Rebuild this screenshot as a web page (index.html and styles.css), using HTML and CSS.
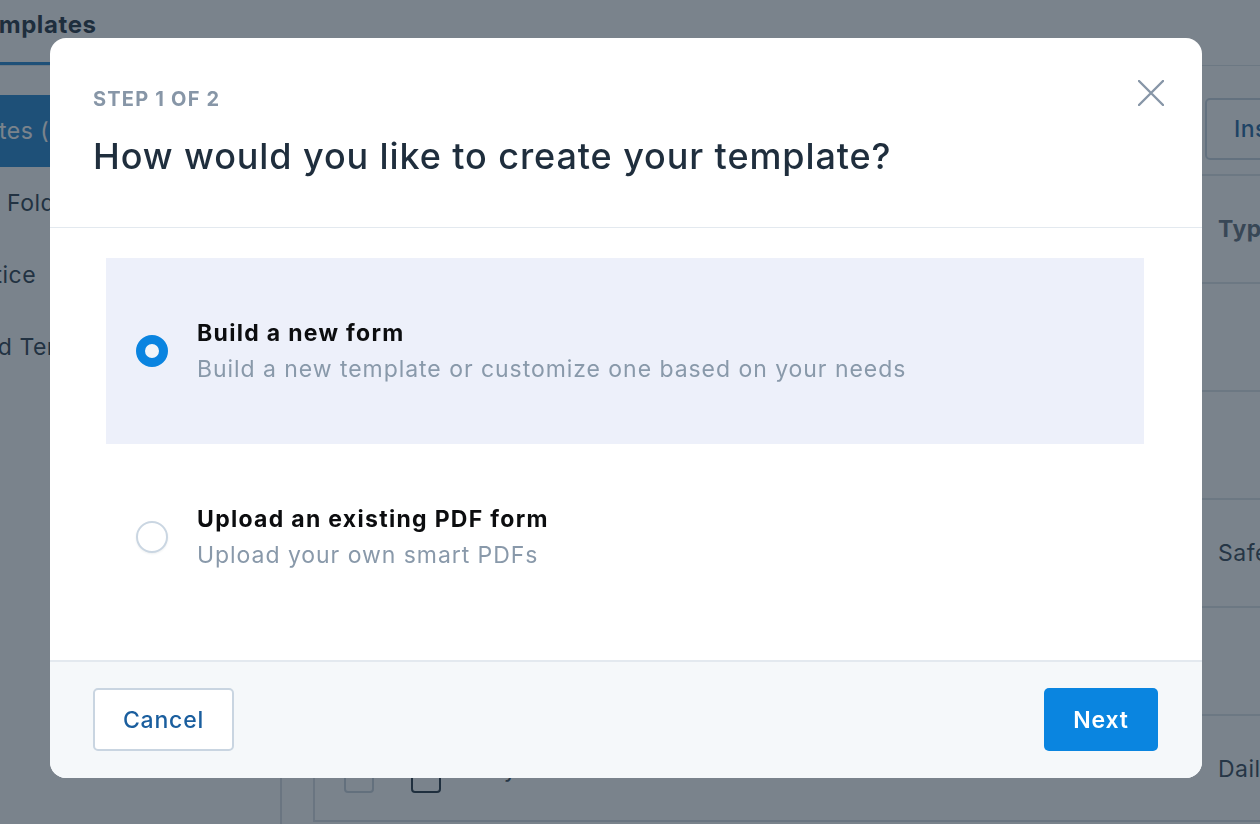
FILE: index.html
```html
<!DOCTYPE html>
<html lang="en">
<head>
<meta charset="utf-8">
<title>Templates</title>
<link rel="stylesheet" href="styles.css">
</head>
<body>
<div class="app">
  <header class="topbar">
    <h1 class="tab">Templates</h1>
  </header>
  <div class="main">
    <nav class="sidebar">
      <div class="item item-active"><span class="shift-a">My Templates (12)</span></div>
      <div class="item"><span class="shift-b">Shared Folders</span></div>
      <div class="item"><span class="shift-c">Practice</span></div>
      <div class="item"><span class="shift-d">Archived Templates</span></div>
    </nav>
    <section class="content">
      <div class="panel">
        <div class="toolbar">
          <button class="insert-btn">Insert</button>
        </div>
        <div class="row row-head">
          <span class="cb"></span><span class="cb cb-dark"></span><span class="name">Name</span><span class="type">Type</span>
        </div>
        <div class="row">
          <span class="cb"></span><span class="cb cb-dark"></span><span class="name">Intake Form</span><span class="type"></span>
        </div>
        <div class="row">
          <span class="cb"></span><span class="cb cb-dark"></span><span class="name">Consent Form</span><span class="type"></span>
        </div>
        <div class="row">
          <span class="cb"></span><span class="cb cb-dark"></span><span class="name">Safety Plan</span><span class="type">Safety Plan</span>
        </div>
        <div class="row">
          <span class="cb"></span><span class="cb cb-dark"></span><span class="name">Progress Note</span><span class="type"></span>
        </div>
        <div class="row">
          <span class="cb"></span><span class="cb cb-dark"></span><span class="name">Daily Check-in</span><span class="type">Daily Log</span>
        </div>
      </div>
    </section>
  </div>
</div>

<div class="overlay">
  <div class="modal" role="dialog" aria-labelledby="modal-title">
    <button class="close" aria-label="Close">
      <svg width="26" height="26" viewBox="0 0 26 26"><path d="M1 1 L25 25 M25 1 L1 25" stroke="#8796a7" stroke-width="2.4" stroke-linecap="round" fill="none"/></svg>
    </button>
    <div class="modal-header">
      <div class="step">Step 1 of 2</div>
      <h2 class="title" id="modal-title">How would you like to create your template?</h2>
    </div>
    <div class="modal-body">
      <label class="option option-selected">
        <span class="radio radio-on"></span>
        <span class="option-text">
          <span class="option-title">Build a new form</span>
          <span class="option-sub">Build a new template or customize one based on your needs</span>
        </span>
      </label>
      <label class="option">
        <span class="radio"></span>
        <span class="option-text">
          <span class="option-title">Upload an existing PDF form</span>
          <span class="option-sub">Upload your own smart PDFs</span>
        </span>
      </label>
    </div>
    <div class="modal-footer">
      <button class="btn btn-cancel">Cancel</button>
      <button class="btn btn-next">Next</button>
    </div>
  </div>
</div>
</body>
</html>
```

FILE: styles.css
```css
* { box-sizing: border-box; }
html, body { margin: 0; padding: 0; }
body {
  font-family: Inter, "Noto Sans", "Liberation Sans", sans-serif;
  background: #ffffff;
  width: 1260px;
  height: 824px;
  overflow: hidden;
}

/* ---------- background page ---------- */
.app {
  width: 1260px;
  height: 824px;
  overflow: hidden;
  display: flex;
  flex-direction: column;
  background: #ffffff;
}
.topbar {
  height: 66px;
  border-bottom: 1px solid #dde3e9;
  display: flex;
  flex: 0 0 66px;
}
.tab {
  margin: 0 0 0 -31px;
  padding: 8px 14px 0 0;
  font-size: 24px;
  font-weight: 700;
  letter-spacing: 0.6px;
  color: #1b2b3b;
  height: 65px;
  border-bottom: 3px solid #1a7fcc;
  line-height: 34px;
  width: 260px;
}
.main {
  flex: 1;
  display: flex;
  min-height: 0;
}
.sidebar {
  width: 282px;
  flex: 0 0 282px;
  border-right: 2px solid #d7dde4;
  padding-top: 29px;
}
.item {
  height: 72px;
  line-height: 72px;
  font-size: 23px;
  letter-spacing: 0.5px;
  color: #253646;
  white-space: nowrap;
  overflow: hidden;
}
.item-active {
  background: #1a7fcc;
  color: #ffffff;
}
.shift-a { display: inline-block; margin-left: -125px; }
.shift-b { display: inline-block; margin-left: -80px; }
.shift-c { display: inline-block; margin-left: -57px; }
.shift-d { display: inline-block; margin-left: -88px; }

.content {
  flex: 1;
  padding: 0 0 2px 31px;
  min-width: 0;
}
.panel {
  height: 100%;
  border-left: 2px solid #d7dde4;
  border-bottom: 2px solid #d7dde4;
  overflow: hidden;
}
.toolbar {
  height: 108px;
  display: flex;
  align-items: center;
  justify-content: flex-end;
  padding-top: 18px;
}
.insert-btn {
  font-family: inherit;
  flex: 0 0 150px;
  width: 150px;
  height: 62px;
  margin-right: -95px;
  border: 2px solid #c6d2de;
  border-radius: 5px;
  background: #ffffff;
  color: #1a5f9e;
  font-size: 23px;
  font-weight: 500;
  letter-spacing: 0.5px;
  text-align: left;
  padding-left: 27px;
}
.row {
  height: 108px;
  border-top: 2px solid #dde3e9;
  display: flex;
  align-items: center;
  padding-left: 29px;
  white-space: nowrap;
  font-size: 23px;
  letter-spacing: 0.5px;
  color: #2e3f50;
  overflow: hidden;
}
.row > span { flex-shrink: 0; }
.cb {
  flex: 0 0 30px;
  width: 30px;
  height: 28px;
  border: 2px solid #c6d0da;
  border-radius: 4px;
  margin-right: 37px;
  margin-top: 20px;
}
.cb-dark { border-color: #1d2f3e; margin-right: 20px; }
.row-head .cb { visibility: hidden; }
.name { flex: 0 0 757px; width: 757px; }
.type { flex: 0 0 200px; width: 200px; }
.row-head .type { font-weight: 700; color: #5b6a79; }
.row-head .name { visibility: hidden; }

/* ---------- overlay + modal ---------- */
.overlay {
  position: fixed;
  inset: 0;
  background: rgba(33, 48, 63, 0.6);
}
.modal {
  position: absolute;
  left: 50px;
  top: 38px;
  width: 1152px;
  height: 740px;
  background: #ffffff;
  border-radius: 16px;
  overflow: hidden;
  display: flex;
  flex-direction: column;
}
.close {
  position: absolute;
  top: 42px;
  right: 38px;
  margin: 0;
  padding: 0;
  border: 0;
  background: transparent;
  width: 26px;
  height: 26px;
  line-height: 0;
}
.modal-header {
  flex: 0 0 190px;
  border-bottom: 1px solid #e3e9ef;
  padding: 49px 43px 0 43px;
}
.step {
  font-size: 20px;
  line-height: 24px;
  font-weight: 700;
  letter-spacing: 1.2px;
  text-transform: uppercase;
  color: #8796a7;
}
.title {
  margin: 23px 0 0 0;
  font-size: 36px;
  line-height: 44px;
  font-weight: 500;
  color: #1f2e3d;
  letter-spacing: 0.9px;
}
.modal-body {
  flex: 0 0 432px;
  padding: 30px 58px 30px 56px;
  display: flex;
  flex-direction: column;
}
.option {
  height: 186px;
  display: flex;
  align-items: center;
  padding-left: 30px;
}
.option-selected { background: #edf0fa; }
.radio {
  flex: 0 0 32px;
  width: 32px;
  height: 32px;
  border-radius: 50%;
  border: 2px solid #cad6e2;
  background: #ffffff;
  box-shadow: 0 1px 2px rgba(40, 60, 80, 0.08);
}
.radio-on {
  border: 9px solid #0a84e0;
  background: #f2f5f9;
  box-shadow: none;
}
.option-text {
  display: flex;
  flex-direction: column;
  margin-left: 29px;
  margin-top: 0;
}
.option-title {
  font-size: 23px;
  line-height: 36px;
  font-weight: 700;
  letter-spacing: 1.3px;
  color: #0c0d0f;
}
.option-sub {
  font-size: 23px;
  line-height: 36px;
  letter-spacing: 0.95px;
  color: #8999aa;
}
.modal-footer {
  flex: 1;
  border-top: 2px solid #e3e9ef;
  background: #f5f8fa;
  display: flex;
  justify-content: space-between;
  align-items: flex-start;
  padding: 26px 44px 0 43px;
}
.btn {
  font-family: inherit;
  height: 63px;
  font-size: 23px;
  letter-spacing: 0.8px;
  border-radius: 5px;
  cursor: pointer;
}
.btn-cancel {
  width: 141px;
  border: 2px solid #c9d5e1;
  background: #ffffff;
  color: #1a5e9e;
  font-weight: 500;
}
.btn-next {
  width: 114px;
  border: 0;
  background: #0a85e0;
  color: #ffffff;
  font-weight: 600;
}
```
